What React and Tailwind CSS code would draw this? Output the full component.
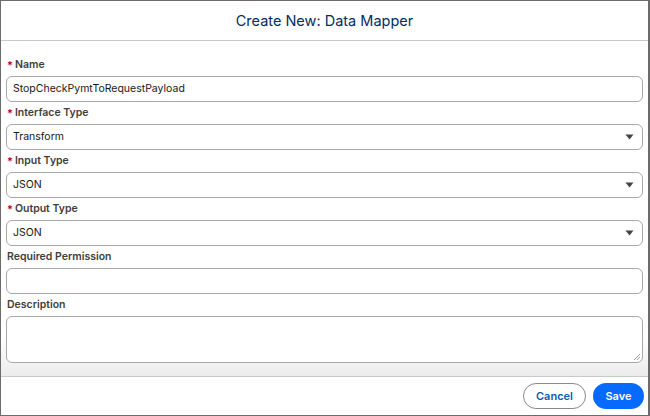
import React from "react";

const font = { fontFamily: "Inter, 'Noto Sans', sans-serif" };

function Label({ children, required }) {
  return (
    <div className="flex items-center h-[14px] mb-[4px] pl-[1px] text-[10.5px] font-semibold text-[#3e3e3c] leading-[14px]">
      {required && <span className="text-[#ba0517] mr-[2px] text-[11px]">*</span>}
      {children}
    </div>
  );
}

function TextInput({ value }) {
  return (
    <div className="h-[26px] border border-[#a8a8a8] rounded-[6px] bg-white flex items-center px-[6px] text-[10.5px] text-[#181818]">
      {value}
    </div>
  );
}

function Select({ value }) {
  return (
    <div className="h-[26px] border border-[#a8a8a8] rounded-[6px] bg-white flex items-center justify-between pl-[6px] pr-[8px] text-[10.5px] text-[#181818]">
      <span>{value}</span>
      <svg width="9" height="6" viewBox="0 0 9 6">
        <path d="M0.5 0.5 L8.5 0.5 L4.5 5.5 Z" fill="#444" />
      </svg>
    </div>
  );
}

function Field({ label, required, children }) {
  return (
    <div className="mb-[4px]">
      <Label required={required}>{label}</Label>
      {children}
    </div>
  );
}

export default function App() {
  return (
    <div style={font} className="w-[650px] h-[416px] border border-[#6b6b6b] border-r-2 bg-white flex flex-col overflow-hidden">
      <div className="h-[40px] shrink-0 border-b border-[#c9c9c9] flex items-center justify-center">
        <h1 className="text-[14.5px] text-[#032d60] font-normal">Create New: Data Mapper</h1>
      </div>
      <div className="flex-1 px-[5px] pt-[17px] bg-gradient-to-b from-white from-[88%] to-[#ececec]">
        <Field label="Name" required>
          <TextInput value="StopCheckPymtToRequestPayload" />
        </Field>
        <Field label="Interface Type" required>
          <Select value="Transform" />
        </Field>
        <Field label="Input Type" required>
          <Select value="JSON" />
        </Field>
        <Field label="Output Type" required>
          <Select value="JSON" />
        </Field>
        <Field label="Required Permission">
          <TextInput value="" />
        </Field>
        <Field label="Description">
          <div className="relative h-[47px] border border-[#a8a8a8] rounded-[6px] bg-white">
            <svg className="absolute right-[1px] bottom-[1px]" width="8" height="8" viewBox="0 0 8 8">
              <path d="M7 1 L1 7 M7 4 L4 7" stroke="#9a9a9a" strokeWidth="1" />
            </svg>
          </div>
        </Field>
      </div>
      <div className="h-[39px] shrink-0 border-t border-[#c9c9c9] bg-white flex items-center justify-end gap-[7px] pr-[4px]">
        <button className="h-[26px] w-[63px] rounded-full border border-[#8a8a8a] bg-white text-[11px] font-semibold text-[#0b5cab]">
          Cancel
        </button>
        <button className="h-[26px] w-[51px] rounded-full bg-[#066afe] text-[11px] font-semibold text-white">
          Save
        </button>
      </div>
    </div>
  );
}
